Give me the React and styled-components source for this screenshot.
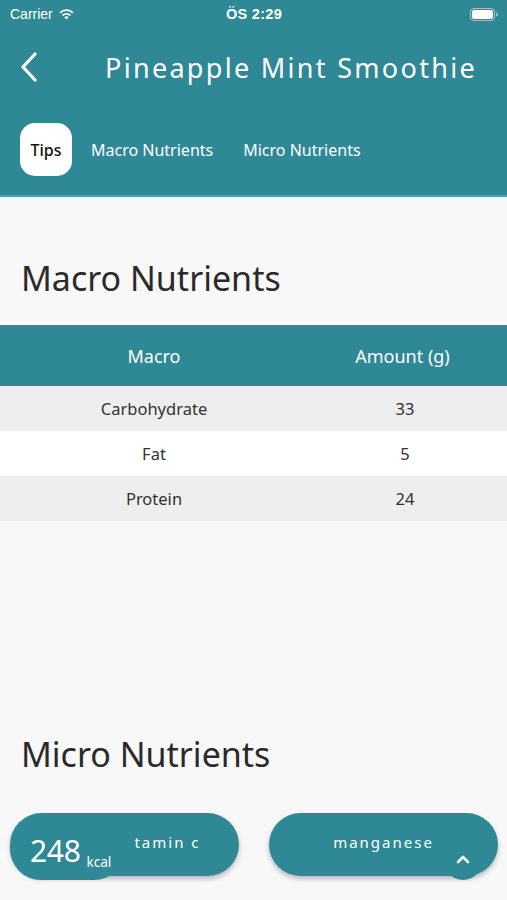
import React from 'react';
import styled, { createGlobalStyle } from 'styled-components';

const teal = '#2e8896';

const GlobalStyle = createGlobalStyle`
  html, body {
    margin: 0;
    padding: 0;
    background: #f8f8f8;
    font-family: "Noto Sans", "Open Sans", sans-serif;
  }
  * { box-sizing: border-box; }
`;

const Screen = styled.div`
  position: relative;
  width: 507px;
  height: 900px;
  overflow: hidden;
  background: #f8f8f8;
`;

const Header = styled.header`
  background: ${teal};
  height: 197px;
  border-bottom: 2px solid #4ea3ae;
  display: flex;
  flex-direction: column;
`;

const StatusBar = styled.div`
  height: 28px;
  display: flex;
  align-items: center;
  justify-content: space-between;
  padding: 0 9px 0 10px;
  color: #fff;
  font-family: "Liberation Sans", Arial, sans-serif;
  font-size: 14px;
`;

const StatusLeft = styled.div`
  display: flex;
  align-items: center;
  gap: 5px;
  width: 110px;
`;

const Time = styled.div`
  font-weight: 700;
  font-size: 14.5px;
  letter-spacing: 0.3px;
`;

const StatusRight = styled.div`
  width: 110px;
  display: flex;
  justify-content: flex-end;
`;

const TitleRow = styled.div`
  height: 78px;
  display: flex;
  align-items: center;
  padding: 0 0 0 20px;
`;

const BackButton = styled.div`
  width: 22px;
  display: flex;
  align-items: center;
`;

const Title = styled.h1`
  margin: 0 0 0 63px;
  color: #fff;
  font-weight: 400;
  font-size: 27px;
  letter-spacing: 2.3px;
  white-space: nowrap;
`;

const Tabs = styled.nav`
  display: flex;
  align-items: center;
  padding: 17px 0 0 20px;
`;

const Tab = styled.div`
  height: 53px;
  display: flex;
  align-items: center;
  justify-content: center;
  font-size: 16px;
  font-weight: ${p => (p.$active ? 500 : 400)};
  color: ${p => (p.$active ? '#111' : '#fff')};
  background: ${p => (p.$active ? '#fff' : 'transparent')};
  border-radius: ${p => (p.$active ? '15px' : '0')};
  width: ${p => (p.$active ? '52px' : 'auto')};
  margin-right: ${p => (p.$active ? '19px' : '30px')};
`;

const Section = styled.section`
  padding: 0;
`;

const SectionTitle = styled.h2`
  margin: 0;
  padding: ${p => p.$top}px 21px 0;
  font-weight: 400;
  font-size: 34px;
  line-height: 40px;
  color: #2a2a2a;
  height: ${p => p.$height}px;
`;

const Table = styled.div`
  display: flex;
  flex-direction: column;
`;

const Row = styled.div`
  display: grid;
  grid-template-columns: 308px 1fr;
  align-items: center;
  height: ${p => (p.$head ? 61 : 45)}px;
  background: ${p => (p.$head ? teal : p.$alt ? '#eeeeee' : '#ffffff')};
  color: ${p => (p.$head ? '#fff' : '#333')};
  font-size: ${p => (p.$head ? 18 : 16.5)}px;
`;

const Cell = styled.div`
  text-align: center;
  padding-right: ${p => p.$pr || 0}px;
`;

const Pill = styled.div`
  position: absolute;
  top: 813px;
  left: ${p => p.$left}px;
  width: 229px;
  height: 63px;
  border-radius: 32px;
  background: ${teal};
  box-shadow: 0 3px 5px rgba(0, 0, 0, 0.25);
  color: #fff;
  display: flex;
  align-items: center;
  justify-content: center;
  font-size: 15px;
  letter-spacing: 2px;
  padding-bottom: 6px;
`;

const PillLabel = styled.span`
  margin-left: ${p => p.$ml || 0}px;
`;

const KcalBubble = styled.div`
  position: absolute;
  top: 818px;
  left: 10px;
  width: 115px;
  height: 62px;
  border-radius: 31px;
  background: ${teal};
  color: #fff;
  display: flex;
  align-items: flex-end;
  padding: 0 0 14px 20px;
  z-index: 2;
`;

const KcalValue = styled.span`
  font-size: 30px;
  line-height: 1;
  letter-spacing: -0.3px;
`;

const KcalUnit = styled.span`
  font-size: 13.5px;
  margin-left: 6px;
  margin-bottom: -5px;
`;

const UpBubble = styled.div`
  position: absolute;
  top: 834px;
  left: 444px;
  width: 38px;
  height: 46px;
  border-radius: 19px;
  background: ${teal};
  display: flex;
  align-items: center;
  justify-content: center;
  padding-top: 4px;
  z-index: 2;
`;

const rows = [
  ['Carbohydrate', '33'],
  ['Fat', '5'],
  ['Protein', '24'],
];

export default function App() {
  return (
    <Screen>
      <GlobalStyle />
      <Header>
        <StatusBar>
          <StatusLeft>
            <span>Carrier</span>
            <svg width="17" height="12" viewBox="0 0 17 12">
              <path d="M8.5 11.5 L6.3 9.2 A3.2 3.2 0 0 1 10.7 9.2 Z" fill="#fff" />
              <path d="M3.9 6.8 A6.6 6.6 0 0 1 13.1 6.8 L11.8 8.1 A4.8 4.8 0 0 0 5.2 8.1 Z" fill="#fff" />
              <path d="M1.3 4.2 A10.3 10.3 0 0 1 15.7 4.2 L14.4 5.5 A8.4 8.4 0 0 0 2.6 5.5 Z" fill="#fff" />
            </svg>
          </StatusLeft>
          <Time>ÖS 2:29</Time>
          <StatusRight>
            <svg width="28" height="13" viewBox="0 0 28 13">
              <rect x="0.5" y="0.5" width="24" height="12" rx="3.5" fill="none" stroke="rgba(255,255,255,0.5)" />
              <rect x="2" y="2" width="21" height="9" rx="2" fill="#fff" />
              <path d="M26 4.5 v4 a2 2 0 0 0 0 -4z" fill="rgba(255,255,255,0.5)" />
            </svg>
          </StatusRight>
        </StatusBar>
        <TitleRow>
          <BackButton>
            <svg width="18" height="30" viewBox="0 0 18 30">
              <path d="M15 2 L3 15 L15 28" fill="none" stroke="#fff" strokeWidth="3.2" strokeLinecap="round" strokeLinejoin="round" />
            </svg>
          </BackButton>
          <Title>Pineapple Mint Smoothie</Title>
        </TitleRow>
        <Tabs>
          <Tab $active>Tips</Tab>
          <Tab>Macro Nutrients</Tab>
          <Tab>Micro Nutrients</Tab>
        </Tabs>
      </Header>

      <Section>
        <SectionTitle $top={61} $height={128}>Macro Nutrients</SectionTitle>
        <Table>
          <Row $head>
            <Cell>Macro</Cell>
            <Cell $pr={10}>Amount (g)</Cell>
          </Row>
          {rows.map(([name, val], i) => (
            <Row key={name} $alt={i % 2 === 0}>
              <Cell>{name}</Cell>
              <Cell $pr={5}>{val}</Cell>
            </Row>
          ))}
        </Table>
      </Section>

      <Section>
        <SectionTitle $top={213} $height={290}>Micro Nutrients</SectionTitle>
      </Section>

      <Pill $left={10}>
        <PillLabel $ml={86}>tamin c</PillLabel>
      </Pill>
      <KcalBubble>
        <KcalValue>248</KcalValue>
        <KcalUnit>kcal</KcalUnit>
      </KcalBubble>
      <Pill $left={269}>
        <PillLabel>manganese</PillLabel>
      </Pill>
      <UpBubble>
        <svg width="14" height="9" viewBox="0 0 14 9">
          <path d="M2 7 L7 2 L12 7" fill="none" stroke="#fff" strokeWidth="2.6" strokeLinecap="round" strokeLinejoin="round" />
        </svg>
      </UpBubble>
    </Screen>
  );
}
